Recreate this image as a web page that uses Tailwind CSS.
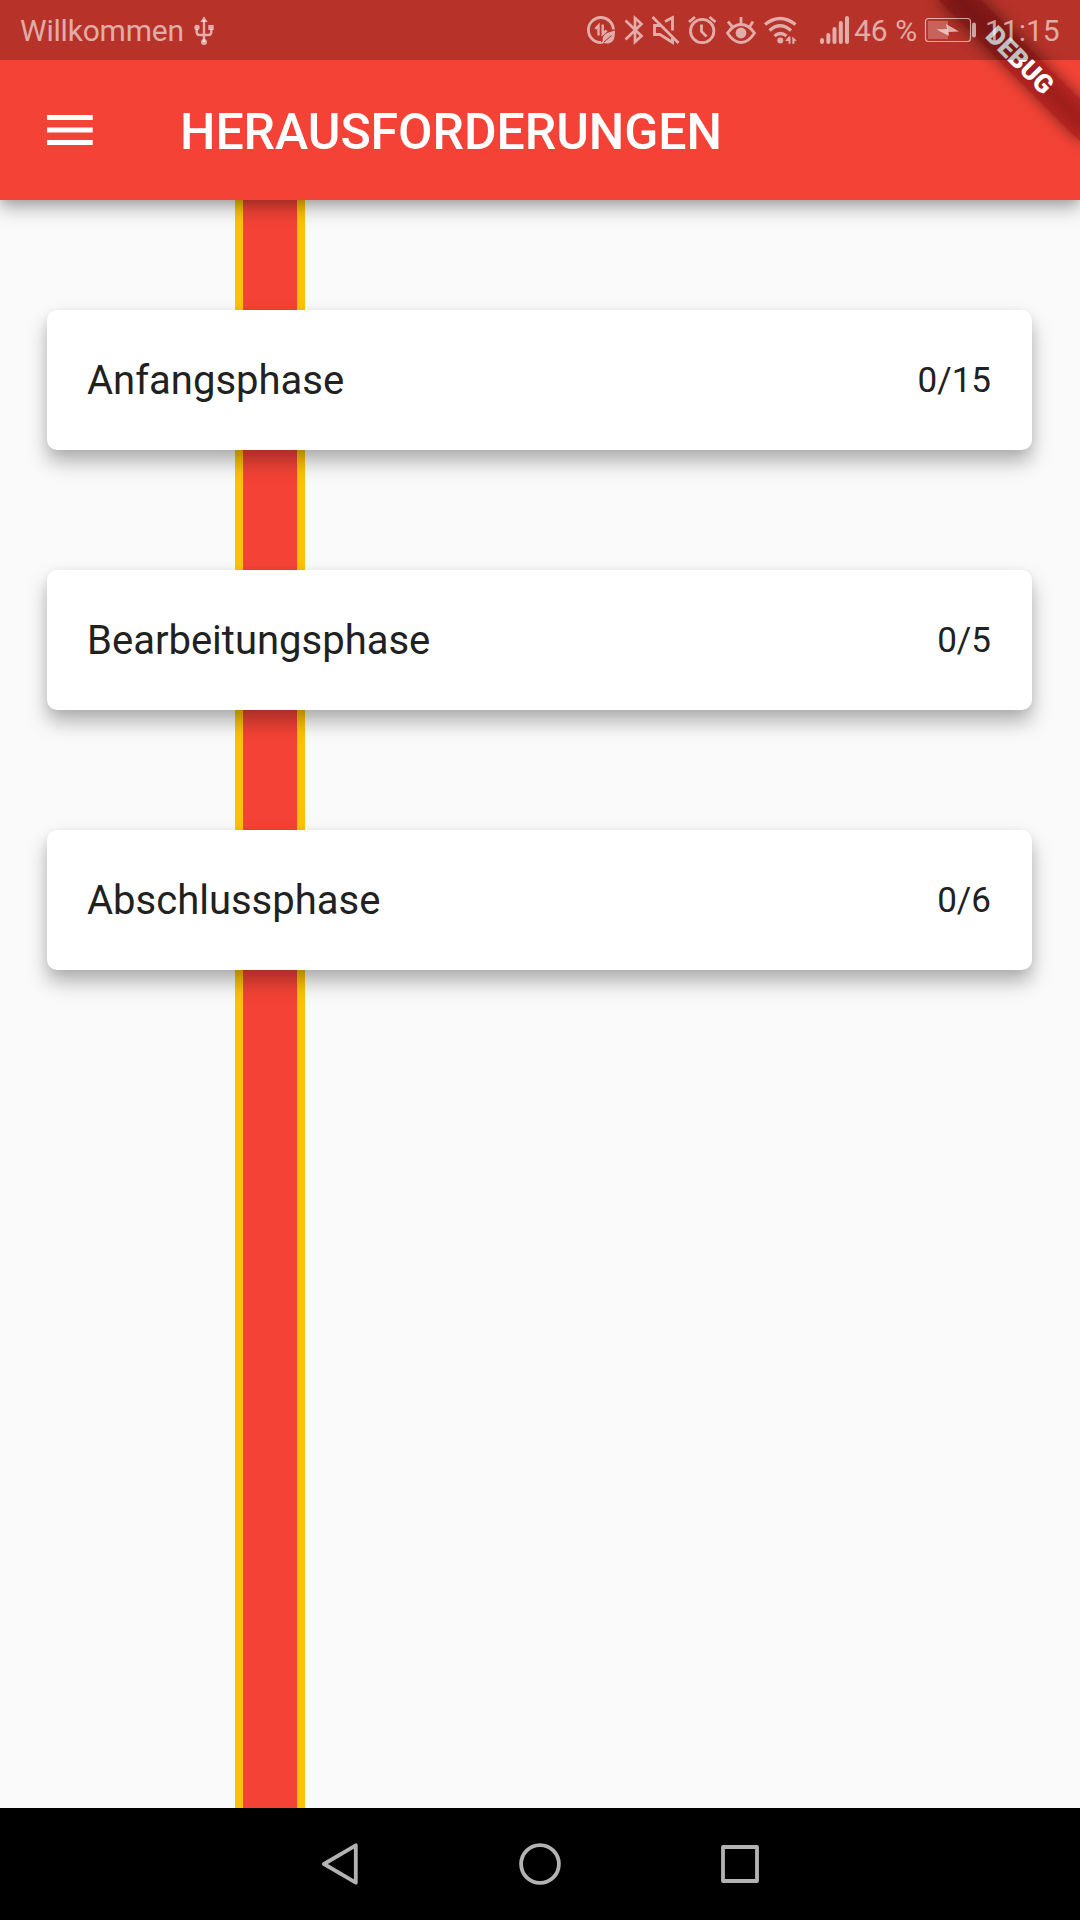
<!DOCTYPE html>
<html lang="de">
<head>
<meta charset="utf-8">
<title>Herausforderungen</title>
<script src="https://cdn.jsdelivr.net/npm/@tailwindcss/browser@4"></script>
</head>
<body class="relative flex h-[1920px] w-[1080px] flex-col overflow-hidden bg-[#fafafa] font-['Roboto',sans-serif] text-[#212121]">

  <!-- App bar, extends behind the status bar -->
  <header class="relative z-10 flex h-[200px] shrink-0 items-center bg-[#f44336] pt-[60px] pl-[47px] text-white shadow-[0_8px_18px_rgba(0,0,0,0.3),0_2px_10px_rgba(0,0,0,0.12)]">
    <svg class="h-[30px] w-[46px]" viewBox="0 0 46 30" fill="currentColor"><path d="M0 0h45.700v5H0zM0 12.500h45.700v5H0zM0 25h45.700v5H0z"/></svg>
    <h1 class="ml-[87px] pt-[4px] text-[50px] leading-[60px] font-medium tracking-[-0.05px]">HERAUSFORDERUNGEN</h1>
  </header>

  <main class="relative flex grow flex-col gap-[120px] pt-[110px] pr-[48px] pl-[47px]">
    <!-- Vertical track -->
    <div class="absolute inset-y-0 left-[235px] w-[70px] border-x-8 border-[#ffc107] bg-[#f44336]"></div>

    <section class="relative flex h-[140px] items-center justify-between rounded-[10px] bg-white pt-[2px] pr-[41px] pl-[40px] shadow-[0_12px_20px_rgba(0,0,0,0.29),0_2px_8px_rgba(0,0,0,0.06)]">
      <span class="text-[40px]">Anfangsphase</span><span class="pt-px text-[35px]">0/15</span>
    </section>
    <section class="relative flex h-[140px] items-center justify-between rounded-[10px] bg-white pt-[2px] pr-[41px] pl-[40px] shadow-[0_12px_20px_rgba(0,0,0,0.29),0_2px_8px_rgba(0,0,0,0.06)]">
      <span class="text-[40px]">Bearbeitungsphase</span><span class="pt-px text-[35px]">0/5</span>
    </section>
    <section class="relative flex h-[140px] items-center justify-between rounded-[10px] bg-white pt-[2px] pr-[41px] pl-[40px] shadow-[0_12px_20px_rgba(0,0,0,0.29),0_2px_8px_rgba(0,0,0,0.06)]">
      <span class="text-[40px]">Abschlussphase</span><span class="pt-px text-[35px]">0/6</span>
    </section>
  </main>

  <!-- Android navigation bar -->
  <nav class="relative z-10 flex h-[112px] shrink-0 items-center gap-[160px] bg-black pl-[320px] text-[#b3b3b3]">
    <svg class="h-[42px] w-[39px]" viewBox="0 0 39 42" fill="none" stroke="currentColor" stroke-width="3.800" stroke-linejoin="round"><path d="M4 21 35.800 2.300v37.400z"/></svg>
    <svg class="h-[42px] w-[42px]" viewBox="0 0 42 42" fill="none" stroke="currentColor" stroke-width="3.800"><circle cx="21" cy="21" r="18.900"/></svg>
    <svg class="h-[42px] w-[38px]" viewBox="0 0 38 42" fill="none" stroke="currentColor" stroke-width="3.800" stroke-linejoin="round"><path d="M2 4h34v34H2z"/></svg>
  </nav>

  <!-- Debug ribbon -->
  <div class="absolute top-0 right-0 z-20 h-[200px] w-[200px] overflow-hidden">
    <div class="absolute top-0 left-[200px] h-0 w-0 rotate-45">
      <div class="absolute top-[70px] left-[-100px] h-[30px] w-[200px] bg-black/50 blur-[8px]"></div>
      <div class="absolute top-[70px] left-[-100px] flex h-[30px] w-[200px] items-center justify-center bg-[#b71c1c]/63 text-[26px] leading-[30px] font-black text-white">DEBUG</div>
    </div>
  </div>

  <!-- Status bar -->
  <div class="absolute inset-x-0 top-0 z-30 flex h-[60px] items-center bg-black/25 pl-[20px] text-[30px] text-white/60">
    <span class="w-[170px] tracking-[-0.2px]">Willkommen</span>
    <svg class="h-[60px] w-[28px]" viewBox="190 0 28 60" fill="none" stroke="currentColor" stroke-width="2.400"><path d="M204 20v22M196.700 29v3q0 3 3 3h8.600q3 0 3-3v-3"/><path fill="currentColor" stroke="none" d="m204 16.500 3.800 5.500h-7.600zM208.300 25h5.400v5h-5.400zM197 24.800a2.700 2.700 0 1 1 0 5.400 2.700 2.700 0 0 1 0-5.400M204 39a3 3 0 1 1 0 6 3 3 0 0 1 0-6"/></svg>
    <div class="ml-auto flex h-[60px] items-center">
      <svg class="h-[60px] w-[36px]" viewBox="584 0 36 60" fill="none" stroke="currentColor" stroke-width="2.800"><path d="M601 42.500a12.500 12.500 0 1 1 12.400-13"/><path stroke-width="2.400" d="M598.500 35.500V25.500l-3.200 3.500M602.700 24.500V34l4-3.500"/><path fill="currentColor" stroke="none" d="M615 30.500c0 8-1.500 13-8 13-1.500 0-2.500-.4-3.200-1l-1.800 1.700-1.300-1.400 2-1.900c-.7-7 5.300-8.400 12.300-10.400"/><path stroke="#b73229" stroke-width="1" d="m604 42 7.500-6.500"/></svg>
      <svg class="h-[60px] w-[28px]" viewBox="620 0 28 60" fill="none" stroke="currentColor" stroke-width="2.700"><path d="m625.500 20.500 16 15.500-6.500 6V18l6.500 6-16 15.500"/></svg>
      <svg class="h-[60px] w-[36px]" viewBox="648 0 36 60" fill="none" stroke="currentColor" stroke-width="2.800"><path d="m652.500 17 26 26M660 25.500h-5.500v9h5.500l12.500 8V37M665 21.500l7.500-4v13"/></svg>
      <svg class="h-[60px] w-[36px]" viewBox="684 0 36 60" fill="none" stroke="currentColor" stroke-width="2.800"><circle cx="702.200" cy="31" r="11.700"/><path d="M701.500 24.500v7l5 5M689 22l6-5M715.500 22l-6-5"/></svg>
      <svg class="h-[60px] w-[40px]" viewBox="720 0 40 60" fill="none" stroke="currentColor" stroke-width="2.800"><path d="M727.500 33q6-8.500 13.500-8.500T754.500 33q-6 9.500-13.500 9.500T727.500 33zM741 25v-8M732.500 27l-4.500-5.500M749.500 27l3.500-5.500"/><circle cx="741" cy="33" r="5.400" fill="currentColor" stroke="none"/></svg>
      <svg class="h-[60px] w-[42px]" viewBox="760 0 42 60" fill="none" stroke="currentColor" stroke-width="3.200"><path d="M765 24.500q15-12 30.500 0M769.500 30.500q10.500-9.500 21.500 0M774.500 36q6-5 12 0"/><circle cx="780.300" cy="40.500" r="3" fill="currentColor" stroke="none"/><path fill="currentColor" stroke="none" d="m785 41 3.700-4.500h1.800v7.300h-2V41zM792.300 36.500l4.500 4.300h-2.300v3h-2.200z"/></svg>
      <svg class="h-[60px] w-[50px]" viewBox="802 0 50 60" fill="none" stroke="currentColor" stroke-width="4" stroke-linecap="round"><path d="M822 40v2M828.300 35v7M834.500 29v13M840.800 23v19M847 18v24"/></svg>
      <span class="w-[70px] pl-[2px] whitespace-nowrap">46 %</span>
      <svg class="h-[60px] w-[62px]" viewBox="922 0 62 60" fill="none" stroke="currentColor"><rect x="925.500" y="18.500" width="45" height="23" rx="3" stroke-width="1.200"/><path fill="currentColor" fill-opacity=".4" stroke="none" d="M928 21h20v18h-20z"/><path fill="currentColor" stroke="none" d="m936.500 29.500 10.500-.5-1-5 13 7.500-10.500.5.500 4z"/><path stroke-width="4" stroke-linecap="round" d="M974 24.500v11"/></svg>
      <span class="w-[96px] pl-px">11:15</span>
    </div>
  </div>
</body>
</html>
